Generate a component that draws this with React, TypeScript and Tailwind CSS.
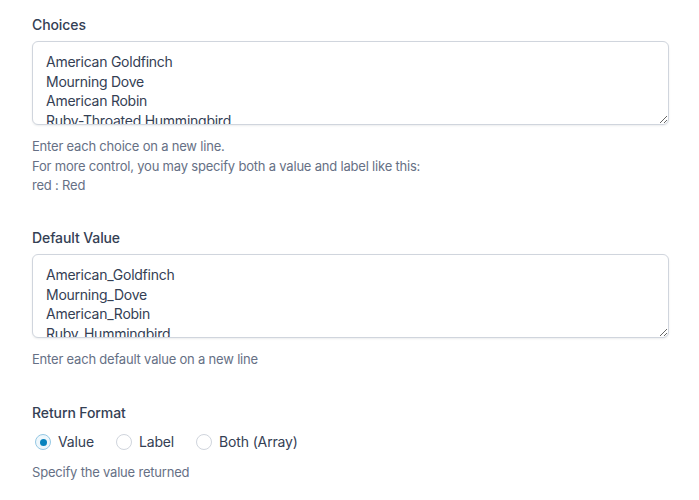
import React from 'react';

const font = { fontFamily: 'Inter, "Noto Sans", "Liberation Sans", sans-serif' };

const Field: React.FC<{ label: string; children: React.ReactNode }> = ({ label, children }) => (
  <div>
    <label className="block text-[14px] leading-[20px] font-medium tracking-[-0.1px] text-[#344054]">{label}</label>
    {children}
  </div>
);

const Area: React.FC<{ value: string }> = ({ value }) => (
  <textarea
    defaultValue={value}
    className="mt-[6px] block w-full h-[84px] rounded-[6px] border border-[#d0d5dd] bg-white pl-[13px] pr-3 pt-[10px] text-[14px] leading-[19.5px] tracking-[-0.25px] text-[#344054] shadow-[0_1px_2px_rgba(16,24,40,0.08)] outline-none resize-y overflow-hidden"
  />
);

const Radio: React.FC<{ label: string; checked?: boolean }> = ({ label, checked }) => (
  <label className="flex items-center gap-[7px] text-[14px] leading-[20px] tracking-[-0.15px] text-[#344054]">
    {checked ? (
      <span className="w-4 h-4 rounded-full border border-[#95c8e4] bg-[#eef7fc] flex items-center justify-center">
        <span className="w-[7px] h-[7px] rounded-full bg-[#0783be]" />
      </span>
    ) : (
      <span className="w-4 h-4 rounded-full border border-[#d0d5dd] bg-white" />
    )}
    {label}
  </label>
);

export default function App() {
  return (
    <div style={font} className="bg-white min-h-[500px] pl-[32px] pr-[30px] pt-[15px]">
      <Field label="Choices">
        <Area value={'American Goldfinch\nMourning Dove\nAmerican Robin\nRuby-Throated Hummingbird\nNorthern Cardinal'} />
        <div className="mt-[12px] text-[13px] leading-[19.7px] tracking-[-0.2px] text-[#667085]">
          <p>Enter each choice on a new line.</p>
          <p>For more control, you may specify both a value and label like this:</p>
          <p>red : Red</p>
        </div>
      </Field>

      <div className="mt-[32px]">
        <Field label="Default Value">
          <Area value={'American_Goldfinch\nMourning_Dove\nAmerican_Robin\nRuby_Hummingbird\nNorthern_Cardinal'} />
          <p className="mt-[11px] text-[13px] leading-[20px] tracking-[-0.2px] text-[#667085]">Enter each default value on a new line</p>
        </Field>
      </div>

      <div className="mt-[34px]">
        <Field label="Return Format">
          <div className="mt-[9px] ml-[3px] flex items-center gap-[22px]">
            <Radio label="Value" checked />
            <Radio label="Label" />
            <Radio label="Both (Array)" />
          </div>
          <p className="mt-[10px] text-[13px] leading-[20px] tracking-[-0.2px] text-[#667085]">Specify the value returned</p>
        </Field>
      </div>
    </div>
  );
}
